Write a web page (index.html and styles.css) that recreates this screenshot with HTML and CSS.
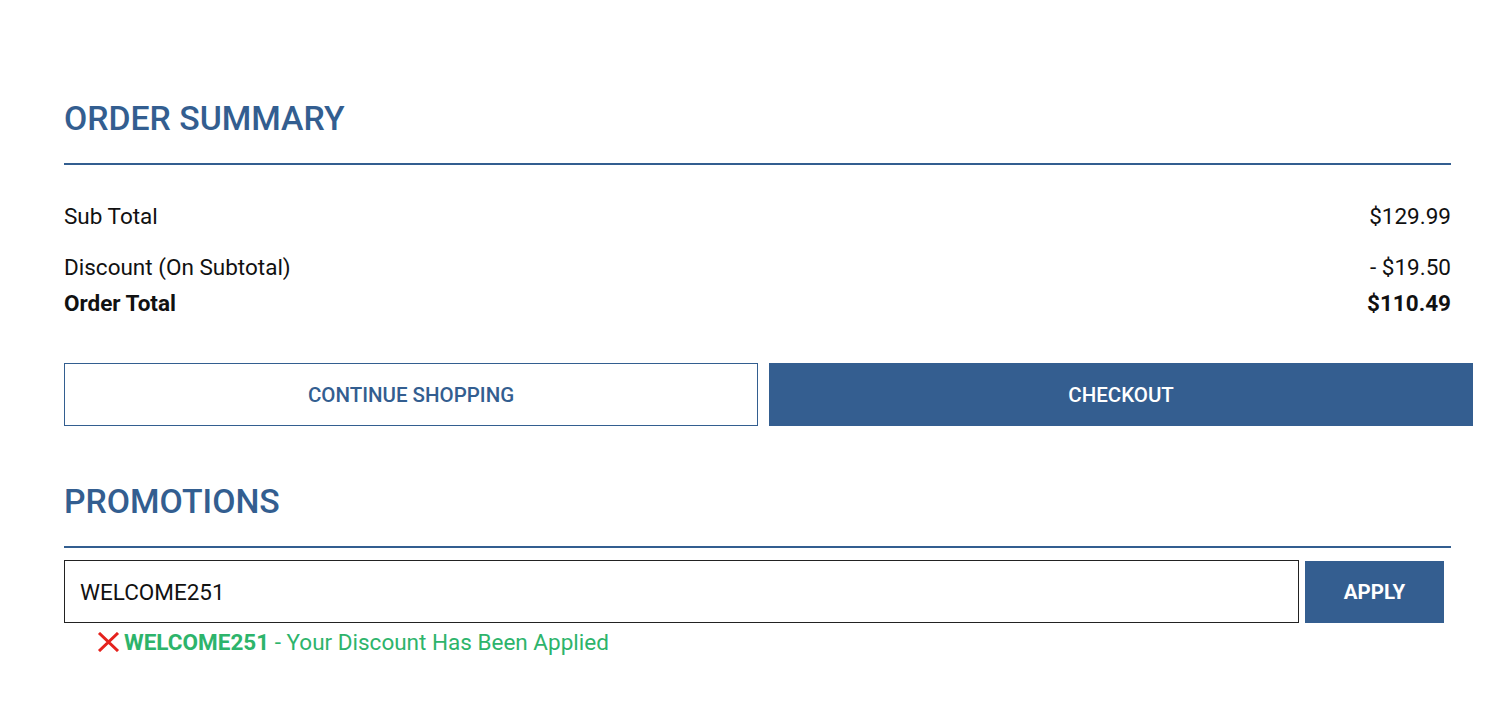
FILE: index.html
```html
<!DOCTYPE html>
<html lang="en">
<head>
    <meta charset="UTF-8">
    <meta name="viewport" content="width=device-width, initial-scale=1.0">
    <title>Cart - Order Summary</title>
    <link rel="stylesheet" href="styles.css">
</head>
<body>
    <div id="cartSummary">
        <h2 class="section-title">ORDER SUMMARY</h2>

        <div class="summary-row sub-total">
            <span>Sub Total</span>
            <span>$129.99</span>
        </div>
        <div class="summary-row discount">
            <span>Discount (On Subtotal)</span>
            <span>- $19.50</span>
        </div>
        <div class="summary-row order-total">
            <span>Order Total</span>
            <span>$110.49</span>
        </div>

        <div class="cart-actions">
            <button id="continueBtn" class="outline-btn">CONTINUE SHOPPING</button>
            <button id="checkoutBtn" class="solid-btn">CHECKOUT</button>
        </div>

        <h2 class="section-title promo-title">PROMOTIONS</h2>

        <div class="promo-form">
            <input id="promoCode" type="text" value="WELCOME251">
            <button id="applyBtn" class="solid-btn">APPLY</button>
        </div>
        <div class="promo-message">
            <!-- remove promo -->
            <svg class="remove-icon" width="23" height="20" viewBox="0 0 23 20">
                <path d="M2 1 L21 19 M21 1 L2 19" stroke="#e5221d" stroke-width="3" fill="none"/>
            </svg>
            <strong>WELCOME251</strong>&nbsp;- Your Discount Has Been Applied
        </div>
    </div>
</body>
</html>
```

FILE: styles.css
```css
body {
    margin: 0;
    font-family: Roboto, "Liberation Sans", Arial, sans-serif;
    background-color: #fff;
    color: #111;
}
#cartSummary {
    width: 1387px;
    margin-left: 64px;
    padding-top: 99px;
}
.section-title {
    margin: 0;
    font-size: 33.75px;
    line-height: 40px;
    font-weight: 500;
    color: #335e90;
    padding-bottom: 24px;
    border-bottom: 2px solid #335e90;
}
.summary-row {
    display: flex;
    justify-content: space-between;
    font-size: 22.5px;
    line-height: 26px;
}
.sub-total {
    margin-top: 38px;
}
.discount {
    margin-top: 25px;
}
.order-total {
    margin-top: 10px;
    font-weight: 700;
}
.cart-actions {
    display: flex;
    gap: 11px;
    margin-top: 47px;
    margin-right: -22px;
}
button {
    font-family: inherit;
    font-size: 20.5px;
    font-weight: 500;
    cursor: pointer;
    border-radius: 0;
}
.outline-btn {
    flex: 693 1 0;
    height: 63px;
    background-color: #fff;
    color: #335e90;
    border: 1px solid #335e90;
}
.solid-btn {
    background-color: #345e90;
    color: #fff;
    border: none;
}
#checkoutBtn {
    flex: 705 1 0;
    height: 63px;
}
.promo-title {
    margin-top: 56px;
    padding-bottom: 24px;
}
.promo-form {
    display: flex;
    gap: 6px;
    margin-top: 12px;
    margin-right: 7px;
}
#promoCode {
    flex: 1;
    height: 63px;
    box-sizing: border-box;
    border: 1px solid #222;
    padding: 0 15px;
    font-family: inherit;
    font-size: 22.5px;
    color: #111;
    outline: none;
}
#applyBtn {
    width: 139px;
    height: 62px;
    margin-top: 1px;
    font-weight: 700;
}
.promo-message {
    display: flex;
    align-items: center;
    margin: 6px 0 0 33px;
    font-size: 22.5px;
    line-height: 26px;
    color: #2db46b;
}
.remove-icon {
    margin-right: 4px;
}
.promo-message strong {
    font-weight: 700;
}
```
